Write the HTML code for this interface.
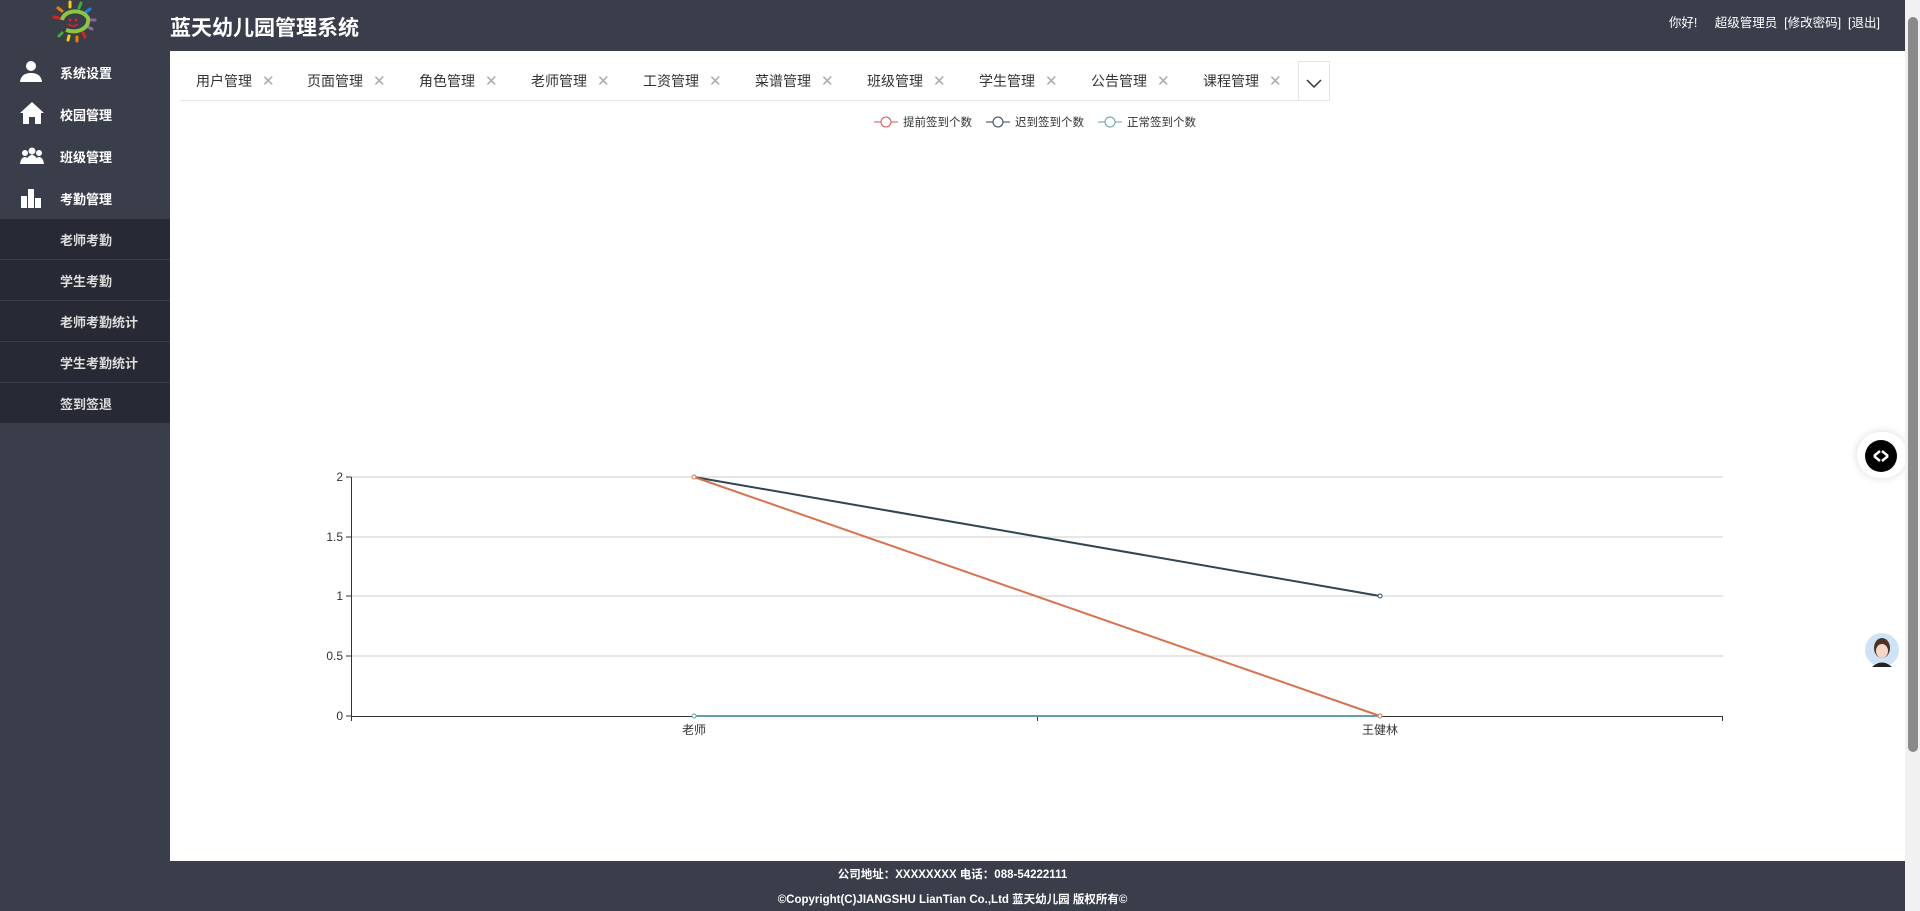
<!DOCTYPE html>
<html><head><meta charset="utf-8">
<style>
*{margin:0;padding:0;box-sizing:border-box}
body{width:1920px;height:911px;overflow:hidden;background:#fff;font-family:"Liberation Sans","Noto Sans CJK SC",sans-serif;position:relative}
.hdr{position:absolute;left:0;top:0;width:1905px;height:51px;background:#3a3e4b}
.title{position:absolute;left:170px;top:12px;color:#fff;font-size:21px;font-weight:bold}
.user{position:absolute;right:25px;top:12px;color:#fff;font-size:12.5px}
.side{position:absolute;left:0;top:51px;width:170px;height:860px;background:#3a3e4b}
.mi{position:absolute;left:0;width:170px;height:42px;color:#fff;font-size:13px;font-weight:bold}
.mi span{position:absolute;left:60px;top:12px}
.mi svg{position:absolute;left:20px;top:9px}
.sub{position:absolute;left:0;width:170px;height:41px;background:#272a34;border-bottom:1px solid #3a3e4b;color:#ddd;font-size:13px;font-weight:bold}
.sub span{position:absolute;left:60px;top:11px}
.tabs{position:absolute;left:180px;top:61px;width:1150px;height:40px;border-bottom:1px solid #e4e4e4}
.tab{position:absolute;top:10px;font-size:14px;color:#333}
.tab i{font-style:normal;color:#aaa;margin-left:10px;font-size:15px}
.dd{position:absolute;left:1298px;top:61px;width:32px;height:40px;border:1px solid #e4e4e4;border-bottom:none}
.foot{position:absolute;left:0;top:861px;width:1905px;height:50px;background:#3a3e4b;color:#fff;font-size:11.5px;font-weight:bold;text-align:center}
.sb{position:absolute;left:1905px;top:0;width:15px;height:911px;background:#f1f1f1}
.sb div{position:absolute;left:3px;top:17px;width:10px;height:735px;background:#8a8a8a;border-radius:5px}
</style></head><body>
<div class="hdr">
<svg style="position:absolute;left:50px;top:0" width="50" height="44" viewBox="0 0 50 44">
<g stroke-width="3" stroke-linecap="round">
<line x1="20" y1="2" x2="20" y2="7" stroke="#f7d000"/><line x1="31" y1="3" x2="29" y2="8" stroke="#3cb030"/>
<line x1="40" y1="9" x2="36" y2="12" stroke="#1e7fe0"/><line x1="45" y1="20" x2="41" y2="20" stroke="#9c5aa0"/>
<line x1="42" y1="29" x2="38" y2="27" stroke="#8e6aa0"/><line x1="35" y1="37" x2="33" y2="33" stroke="#e02020"/>
<line x1="27" y1="41" x2="27" y2="37" stroke="#f08000"/><line x1="18" y1="40" x2="19" y2="36" stroke="#f7d000"/>
<line x1="9" y1="36" x2="12" y2="33" stroke="#3cb030"/><line x1="4" y1="17" x2="9" y2="18" stroke="#e02020"/>
<line x1="8" y1="8" x2="12" y2="11" stroke="#f08000"/></g>
<path d="M12 20 C14 10 32 8 38 18 C40 28 28 34 16 30" fill="none" stroke="#8cc63f" stroke-width="4"/>
<circle cx="20" cy="20" r="1.5" fill="#e02020"/><circle cx="26" cy="20" r="1.5" fill="#e02020"/>
<path d="M18 24 Q23 28 28 24" stroke="#e02020" fill="none" stroke-width="1.5"/></svg>
<div class="title">蓝天幼儿园管理系统</div>
<div class="user">你好!&nbsp;&nbsp;&nbsp;&nbsp;&nbsp;超级管理员&nbsp;&nbsp;[修改密码]&nbsp;&nbsp;[退出]</div>
</div>
<div class="foot"><div style="position:absolute;top:5px;width:100%">公司地址：XXXXXXXX 电话：088-54222111</div><div style="position:absolute;top:30px;width:100%">©Copyright(C)JIANGSHU LianTian Co.,Ltd 蓝天幼儿园 版权所有©</div></div>
<div class="side">
<div class="mi" style="top:0"><svg width="22" height="22" viewBox="0 0 22 22"><circle cx="11" cy="6" r="5" fill="#fff"/><path d="M0 22 Q1 13 11 13 Q21 13 22 22Z" fill="#fff"/></svg><span>系统设置</span></div>
<div class="mi" style="top:42px"><svg width="24" height="22" viewBox="0 0 24 22"><path d="M12 0 L24 11 L21 11 L21 22 L15 22 L15 15 L9 15 L9 22 L3 22 L3 11 L0 11Z" fill="#fff"/></svg><span>校园管理</span></div>
<div class="mi" style="top:84px"><svg width="24" height="22" viewBox="0 0 24 22"><circle cx="12" cy="7" r="3.5" fill="#fff"/><circle cx="5" cy="9" r="3" fill="#fff"/><circle cx="19" cy="9" r="3" fill="#fff"/><path d="M0 20 Q1 13 5 13 Q9 13 10 20Z M14 20 Q15 13 19 13 Q23 13 24 20Z M6 20 Q7 11 12 11 Q17 11 18 20Z" fill="#fff"/></svg><span>班级管理</span></div>
<div class="mi" style="top:126px"><svg width="22" height="22" viewBox="0 0 22 22"><rect x="1" y="10" width="6" height="12" fill="#fff"/><rect x="8" y="3" width="6" height="19" fill="#fff"/><rect x="15" y="12" width="6" height="10" fill="#fff"/></svg><span>考勤管理</span></div>
<div class="sub" style="top:168px"><span>老师考勤</span></div>
<div class="sub" style="top:209px"><span>学生考勤</span></div>
<div class="sub" style="top:250px"><span>老师考勤统计</span></div>
<div class="sub" style="top:291px"><span>学生考勤统计</span></div>
<div class="sub" style="top:332px"><span>签到签退</span></div>
</div>
<div class="tabs">
<div class="tab" style="left:16px">用户管理<i>✕</i></div>
<div class="tab" style="left:127px">页面管理<i>✕</i></div>
<div class="tab" style="left:239px">角色管理<i>✕</i></div>
<div class="tab" style="left:351px">老师管理<i>✕</i></div>
<div class="tab" style="left:463px">工资管理<i>✕</i></div>
<div class="tab" style="left:575px">菜谱管理<i>✕</i></div>
<div class="tab" style="left:687px">班级管理<i>✕</i></div>
<div class="tab" style="left:799px">学生管理<i>✕</i></div>
<div class="tab" style="left:911px">公告管理<i>✕</i></div>
<div class="tab" style="left:1023px">课程管理<i>✕</i></div>
</div>
<div class="dd"><svg width="30" height="40" viewBox="0 0 30 40"><path d="M8 18 L15 25 L22 18" fill="none" stroke="#333" stroke-width="1.5"/></svg></div>
<svg style="position:absolute;left:0;top:0" width="1905" height="861" font-family="Liberation Sans,Noto Sans CJK SC,sans-serif" font-size="12">
<g font-size="11.5" fill="#333">
<line x1="874" y1="122" x2="898" y2="122" stroke="#d9534f"/><circle cx="886" cy="122" r="5" fill="#fff" stroke="#d9534f"/><text x="903" y="126">提前签到个数</text>
<line x1="986" y1="122" x2="1010" y2="122" stroke="#2f4554"/><circle cx="998" cy="122" r="5" fill="#fff" stroke="#2f4554"/><text x="1015" y="126">迟到签到个数</text>
<line x1="1098" y1="122" x2="1122" y2="122" stroke="#61a0a8"/><circle cx="1110" cy="122" r="5" fill="#fff" stroke="#61a0a8"/><text x="1127" y="126">正常签到个数</text>
</g>
<g stroke="#ccc"><line x1="351" y1="477" x2="1723" y2="477"/><line x1="351" y1="537" x2="1723" y2="537"/><line x1="351" y1="596" x2="1723" y2="596"/><line x1="351" y1="656" x2="1723" y2="656"/></g>
<g stroke="#333"><line x1="351.5" y1="477" x2="351.5" y2="716"/><line x1="346" y1="477" x2="351" y2="477"/><line x1="346" y1="537" x2="351" y2="537"/><line x1="346" y1="596" x2="351" y2="596"/><line x1="346" y1="656" x2="351" y2="656"/><line x1="346" y1="716" x2="351" y2="716"/>
<line x1="351" y1="716.5" x2="1723" y2="716.5"/><line x1="351.5" y1="716" x2="351.5" y2="721"/><line x1="1037.5" y1="716" x2="1037.5" y2="721"/><line x1="1722.5" y1="716" x2="1722.5" y2="721"/></g>
<g fill="#333" text-anchor="end"><text x="343" y="481">2</text><text x="343" y="541">1.5</text><text x="343" y="600">1</text><text x="343" y="660">0.5</text><text x="343" y="720">0</text></g>
<g fill="#333" text-anchor="middle"><text x="694" y="734">老师</text><text x="1380" y="734">王健林</text></g>
<polyline points="694,716 1380,716" fill="none" stroke="#61a0a8" stroke-width="2"/>
<polyline points="694,477 1380,596" fill="none" stroke="#2f4554" stroke-width="2"/>
<polyline points="694,477 1380,716" fill="none" stroke="#d9734f" stroke-width="2"/>
<circle cx="694" cy="716" r="2" fill="#fff" stroke="#61a0a8"/><circle cx="1380" cy="596" r="2" fill="#fff" stroke="#2f4554"/>
<circle cx="694" cy="477" r="2" fill="#fff" stroke="#d9734f"/><circle cx="1380" cy="716" r="2" fill="#fff" stroke="#d9734f"/>
<rect x="1857" y="432" width="50" height="46" rx="23" fill="#fff" style="filter:drop-shadow(0 0 4px rgba(0,0,0,.15))"/>
<circle cx="1881" cy="456" r="16" fill="#000"/><path d="M1874 456 L1880 451 M1874 456 L1880 461 M1888 456 L1882 451 M1888 456 L1882 461" stroke="#fff" stroke-width="2.5"/>
<circle cx="1882" cy="650" r="17" fill="#cfe3f7"/><ellipse cx="1882" cy="648" rx="8" ry="10" fill="#4a3228"/><ellipse cx="1882" cy="651" rx="6" ry="7" fill="#f6d6c8"/><path d="M1872 667 Q1882 658 1892 667Z" fill="#222"/>
</svg>
<div class="sb"><div></div></div>
</body></html>
